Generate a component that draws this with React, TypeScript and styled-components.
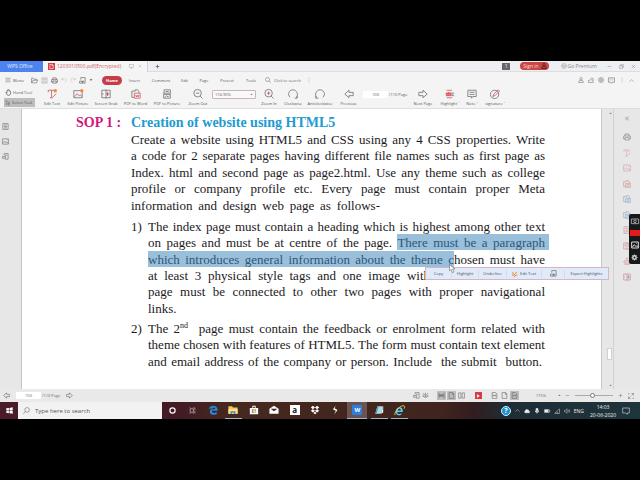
import React from "react";
import styled, { createGlobalStyle, css } from "styled-components";

const Global = createGlobalStyle`
  * { box-sizing: border-box; }
  html, body, #root { height: 100%; }
  body { margin: 0; background: #000; font-family: "Open Sans", "Noto Sans", sans-serif; overflow: hidden; }
  button, input, select { font: inherit; color: inherit; border: 0; margin: 0; padding: 0; background: none; min-width: 0; }
  h1, p, ol { margin: 0; padding: 0; }
`;

/* ---------- icons ---------- */
const paths: Record<string, React.ReactNode> = {
  monitor: <><rect x="2" y="3" width="20" height="14" /><path d="M8 21h8M12 17v4" /></>,
  close: <path d="M4 4l16 16M20 4L4 20" />,
  plus: <path d="M12 3v18M3 12h18" />,
  minus: <path d="M3 12h18" />,
  menu: <path d="M2 5h20M2 12h20M2 19h20" />,
  folder: <path d="M2 20V4h7l3 4h8v3M2 20l5-9h16l-4 9z" />,
  save: <path d="M3 3h18v18H3zM7 3v6h10V3M7 21v-7h10v7" />,
  print: <path d="M6 9V3h12v6M6 18H2V9h20v9h-4M6 14h12v7H6z" />,
  undo: <path d="M3 4v7h7M3 11c4-8 17-8 18 2 0 4-3 7-7 8" />,
  redo: <path d="M21 4v7h-7M21 11C17 3 4 3 3 13c0 4 3 7 7 8" />,
  convert: <path d="M6 9V2h15v19h-9M2 14h10v7H2zM8 17h8M16 12v5" />,
  down: <path d="M5 8h14l-7 8z" fill="currentColor" />,
  play: <path d="M7 3l14 9-14 9z" fill="currentColor" />,
  search: <><circle cx="10" cy="10" r="8" /><path d="M16 16l7 7" /></>,
  find: <><circle cx="14" cy="10" r="8" /><path d="M8 16l-7 7" /></>,
  dots: <path d="M12 3v3M12 11v3M12 19v3" />,
  restore: <path d="M3 8h13v13H3zM8 8V3h13v13h-5" />,
  person: <><circle cx="12" cy="7" r="5" /><path d="M3 22v-5l5-3h8l5 3v5z" /></>,
  share: <path d="M2 12v10h19v-9M7 16c0-7 4-9 9-9V3l6 6-6 5v-3" />,
  ring: <><circle cx="12" cy="12" r="10" /><circle cx="12" cy="12" r="5" /><path d="M10 12h4" /></>,
  chat: <path d="M2 3h20v15h-7l-3 4-3-4H2zM7 10h2M11 10h2M15 10h2" />,
  up: <path d="M2 17l10-9 10 9" />,
  hand: <path d="M7 13V5q2-2 3 0V3q2-2 3 0v2q2-2 3 0v3q3-1 3 1v7q-1 6-7 6-5 0-7-6l-2-4q2-2 4 1z" />,
  cursor: <path d="M5 2v17l5-5 4 8 3-2-4-8h7z" />,
  zoomOut: <><circle cx="11" cy="10" r="9" /><path d="M7 10h8M17 17l6 6" /></>,
  zoomIn: <><circle cx="11" cy="10" r="9" /><path d="M17 17l6 6" /><path d="M7 10h8M11 6v8" stroke="#d04050" /></>,
  clockwise: <path d="M16 22h6v-5M20 21c6-8 1-19-8-19C2 2-2 13 5 20" />,
  anti: <path d="M8 22H2v-5M4 21C-2 13 3 2 12 2c10 0 14 11 7 18" />,
  left: <path d="M2 12l10-9v5h10v8H12v5z" />,
  right: <path d="M22 12L12 3v5H2v8h10v5z" />,
  text: <path d="M3 8V3h15v5M11 3v18M7 21h7M15 19l7-8" />,
  editText: <><path d="M3 8V3h15v5M11 3v18M7 21h7M15 19l7-8" stroke="#b85058" /><circle cx="20" cy="4" r="4" fill="#f28a3c" stroke="none" /></>,
  editPic: <><path d="M2 4h20v17H2z" /><path d="M4 19l6-8 5 6 3-3 3 4" stroke="#c8505a" /><circle cx="21" cy="4" r="4" fill="#f28a3c" stroke="none" /></>,
  grab: <><path d="M2 3h20v18H2zM12 1v22M2 12h4" /><path d="M16 7v10M13 12h7" stroke="#b03040" /></>,
  toWord: <><path d="M2 20V5h8V2h6l3 4v3M2 20h5" /><path d="M8 10h14v12H8zM11 14l2 5 2-4 2 4 2-5" stroke="#d04a56" /></>,
  files: <path d="M2 20V5h8V2h6l3 4v3M2 20h5M8 10h14v12H8zM11 14h8M11 18h8" />,
  toPic: <path d="M5 9V2h15v7M2 10h20M4 13h16v9H4zM7 20l4-4 3 3 3-3M9 6h7" />,
  abc: <><path d="M4 3h13M4 21h13" stroke="#d64c55" /><path d="M2 7h15v10H2z" fill="#f2b0b4" stroke="none" /><path d="M3 15v-4h4v5H3M9 7v9h4v-5H9" stroke="#cf3b46" /><path d="M22 10h-5v6h5" /></>,
  note: <path d="M2 3h20v15h-8l-3 4v-4H2zM6 8h12M6 13h12" />,
  sign: <><circle cx="11" cy="13" r="10" /><path d="M7 18l2-6L20 2l3 3-10 10z" stroke="#c94450" /></>,
  pen: <path d="M4 4v17M8 21l13-5M8 16L20 3" />,
  list: <path d="M3 2h18v20H3zM7 7h10M7 12h10M7 17h10" />,
  picture: <path d="M2 3h20v18H2zM4 18l6-7 5 6 3-3 4 4M16 7h2" />,
  attach: <path d="M7 8V2h14v19H10M2 12h10v6H2zM10 8h8" />,
  first: <path d="M5 3v18M20 3L8 12l12 9" />,
  eye: <path d="M2 14q10-12 20 0-10 10-20 0zM12 2v4M4 4l3 4M20 4l-3 4M12 11v6M9 14h6" />,
  page: <path d="M4 2h12l4 5v15H4zM15 2v6h5" />,
  split: <path d="M2 3h20v18H2zM12 1v22M5 8h4M5 12h4M15 8h4M15 12h4" />,
  stamp: <path d="M9 11V4q3-4 6 0v7M3 12h18v6H3zM4 22h16" />,
  wide: <path d="M3 2v7h18V2M3 22v-7h18v7M1 12h22" />,
  book: <path d="M2 3h8v18H2zM14 3h8v18h-8z" />,
  fit: <path d="M4 2h12l4 5v15H4zM8 12h8M8 9v6M16 9v6" />,
  expand: <path d="M14 2h8v8M2 14v8h8M22 2l-8 8M2 22l8-8M2 6V2h4M22 18v4h-4" />,
  wifi: <path d="M3 22L22 3v19zM9 22q-1-4-2-4M15 22q0-7-4-8" />,
  sound: <path d="M2 9h4l6-6v18l-6-6H2zM16 8q4 4 0 8M20 5q5 7 0 14" />,
  battery: <><path d="M2 6h18v12H2zM20 10h3v5h-3" /><path d="M4 8h12v8H4z" fill="currentColor" /></>,
  mic: <path d="M8 2h8v12H8zM5 11q0 7 7 7 7 0 7-7M12 18v5" fill="currentColor" />,
  cloud: <path d="M4 19q-4-4 1-8 2-7 9-4 4-1 5 4 6 3 2 8z" fill="currentColor" />,
  notice: <path d="M2 3h20v15h-6v4l-5-4H2z" />,
  camera: <><path d="M1 6h22v14H1z" /><circle cx="12" cy="13" r="4" /></>,
  gear: <><circle cx="12" cy="12" r="6" strokeWidth="5" /><path d="M12 1v4M12 19v4M1 12h4M19 12h4M4 4l3 3M17 17l3 3M20 4l-3 3M4 20l3-3" /></>,
  task: <path d="M4 6h11v12H4zM4 1v3M15 1v3M4 20v3M15 20v3M20 2v8M20 13v9" />,
  circle: <circle cx="12" cy="12" r="9" strokeWidth="4" />,
  crown: <><circle cx="12" cy="12" r="10" /><path d="M6 9l3 8h6l3-8-4 3-2-5-2 5z" /></>,
};

const Svg = styled.svg<{ $c?: string; $s: number }>`
  display: block;
  flex: none;
  width: ${p => p.$s}px;
  height: ${p => p.$s}px;
  color: ${p => p.$c || "#666"};
  overflow: visible;
`;
const Icon = ({ n, s = 7, c, w = 2 }: { n: string; s?: number; c?: string; w?: number }) => (
  <Svg viewBox="0 0 24 24" $s={s} $c={c} fill="none" stroke="currentColor" strokeWidth={w} aria-hidden="true">{paths[n]}</Svg>
);
const Art = ({ children, s = 10 }: { children: React.ReactNode; s?: number }) => (
  <Svg viewBox="0 0 24 24" $s={s} fill="none" aria-hidden="true">{children}</Svg>
);

/* ---------- frame ---------- */
const Screen = styled.div`
  height: 100vh;
  padding: 61px 0;
  display: flex;
  flex-direction: column;
  background: #000;
`;
const Row = styled.div<{ $gap?: number; $before?: number }>`
  display: flex;
  align-items: center;
  gap: ${p => p.$gap || 0}px;
  margin-left: ${p => p.$before || 0}px;
`;
const Spacer = styled.div`flex: 1;`;
const IconButton = styled.button<{ $on?: boolean }>`
  display: flex;
  align-items: center;
  justify-content: center;
  ${p => p.$on && css`background: #bdbdbf;`}
`;

/* ---------- title bar ---------- */
const TitleBar = styled.header`
  flex: none;
  height: 11px;
  display: flex;
  align-items: center;
  padding-right: 4px;
  background: #eeeff2;
  color: #85868a;
  font-size: 5px;
  line-height: 10px;
  border-bottom: 1px solid #dcdde0;
`;
const Brand = styled.button`
  width: 43px;
  height: 11px;
  padding-right: 3px;
  background: #4c83ee;
  color: #e4edff;
`;
const Tab = styled.div`
  width: 105px;
  height: 11px;
  display: flex;
  align-items: center;
  gap: 2px;
  padding: 0 5px 0 5px;
  background: #f5f5f6;
  color: #cc6464;
  border-right: 1px solid #d2d3d6;
`;
const TabTools = styled(Row)`margin-left: auto;`;
const NewTab = styled(IconButton)`width: 18px;`;
const PdfMark = styled.span`
  width: 7px;
  height: 7px;
  display: flex;
  align-items: center;
  justify-content: center;
  background: #d63a42;
`;
const Count = styled.span`
  width: 8px;
  height: 7px;
  background: #66676b;
  color: #fff;
  line-height: 7px;
  text-align: center;
`;
const SignIn = styled.button`
  display: flex;
  align-items: center;
  gap: 2px;
  height: 8px;
  padding: 0 2px 0 3px;
  border-radius: 4px;
  background: #cb4642;
  color: #f8dcda;
  line-height: 8px;
`;

/* ---------- menus and tools ---------- */
const MenuBar = styled.nav`
  flex: none;
  height: 15px;
  display: grid;
  grid-template-columns: 26px 71px 20px 25px 28px 19px 20px 26px 22px auto 1fr auto;
  align-items: center;
  padding: 1px 6px 0 5px;
  background: #f4f4f4;
  color: #555;
  font-size: 4px;
`;
const MenuItem = styled.button<{ $active?: boolean }>`
  height: 9px;
  line-height: 9px;
  white-space: nowrap;
  text-align: center;
  ${p => p.$active && css`
    border-radius: 5px;
    background: #c63d48;
    color: #fff;
    font-weight: 700;
  `}
`;
const SearchBox = styled.label`
  display: flex;
  align-items: center;
  gap: 3px;
  padding-left: 3px;
  input { width: 29px; height: 9px; }
  input::placeholder { color: #666; opacity: 1; }
`;
const ToolBar = styled.div`
  flex: none;
  height: 22px;
  display: grid;
  grid-template-columns: 39px 26px 26px 30px 29px 34px 28px 45px 24px 24px 30px 27px 47px 28px 26px 18px 28px;
  background: #f4f4f4;
  color: #555;
  font-size: 4px;
  border-bottom: 1px solid #dedede;
`;
const ModeStack = styled.div`
  display: grid;
  grid-template-rows: 11px 9px;
  padding: 0 4px;
`;
const ModeButton = styled.button<{ $on?: boolean }>`
  display: flex;
  align-items: center;
  gap: 1px;
  padding-left: 1px;
  white-space: nowrap;
  background: ${p => (p.$on ? "#bdbdbd" : "none")};
`;
const Tool = styled.button`
  display: flex;
  flex-direction: column;
  align-items: center;
  gap: 2px;
  padding-top: 2px;
  line-height: 6px;
  white-space: nowrap;
`;
const ZoomField = styled.div`
  height: 9px;
  margin: 3px 1px 0 0;
  display: flex;
  align-items: center;
  padding-right: 2px;
  border: 1px solid #c9b4b8;
  border-radius: 1px;
  background: #f9f9f9;
`;
const ZoomSelect = styled.select`
  appearance: none;
  flex: 1;
  height: 7px;
  padding-left: 2px;
  line-height: 7px;
`;
const PageField = styled.label`
  display: flex;
  align-items: center;
  gap: 1px;
  height: 15px;
  padding-left: 1px;
  white-space: nowrap;
`;
const PageInput = styled.input`
  width: 25px;
  height: 7px;
  background: #fff;
  text-align: center;
`;

/* ---------- document ---------- */
const Work = styled.main`
  flex: 1;
  min-height: 0;
  display: grid;
  grid-template-columns: 22px minmax(0, 1fr) 13px 26px;
  background: #e7e7e8;
`;
const LeftRail = styled.aside`
  display: flex;
  flex-direction: column;
  gap: 8px;
  padding: 14px 0 0 2px;
  border-right: 1px solid #c4c4c6;
`;
const Sheet = styled.article`
  position: relative;
  background: #fff;
  color: #1c1a1d;
  padding: 5px 56px 0 54px;
  font-family: "Liberation Serif", serif;
  font-size: 13px;
`;
const Section = styled.div`
  display: grid;
  grid-template-columns: 55px minmax(0, 1fr);
`;
const Label = styled.strong`
  font-size: 14px;
  line-height: 18px;
  color: #d1177c;
`;
const Title = styled.h1`
  font-size: 14px;
  line-height: 18px;
  color: #1e9bd0;
`;
const Lines = styled.p<{ $h: number }>`
  display: flex;
  flex-direction: column;
  height: ${p => p.$h}px;
`;
const Line = styled.span<{ $ragged?: boolean; $end?: number }>`
  flex: 1;
  display: block;
  padding-right: ${p => p.$end || 0}px;
  line-height: 16px;
  white-space: nowrap;
  text-align: justify;
  text-align-last: ${p => (p.$ragged ? "left" : "justify")};
  sup { font-size: 8px; line-height: 0; vertical-align: 5px; }
`;
const Item = styled.li`
  display: grid;
  grid-template-columns: 17px minmax(0, 1fr);
  line-height: 16px;
`;
const Items = styled.ol`
  list-style: none;
  display: grid;
  gap: 4px;
  margin-top: 5px;
`;
const Mark = styled.mark<{ $tail?: boolean }>`
  background: #99bfdb;
  color: #2d5878;
  padding: 1px 0 0;
  ${p => p.$tail && css`
    padding-right: 4px;
    margin-right: -4px;
  `}
`;
const Popup = styled.div`
  position: absolute;
  left: 403px;
  top: 158px;
  width: 184px;
  height: 13px;
  display: grid;
  grid-template-columns: 25px 27px 28px 35px 23px 1fr;
  align-items: center;
  border: 1px solid #d4b7c6;
  background: #e1eaf8;
  color: #444c5c;
  font: 4px "Open Sans", sans-serif;
  z-index: 2;
`;
const PopupButton = styled.button`
  display: flex;
  align-items: center;
  justify-content: center;
  gap: 2px;
  height: 8px;
  white-space: nowrap;
  & + & { border-left: 1px solid #d3dae8; }
`;
const Pointer = styled.svg`
  position: absolute;
  left: 427px;
  top: 155px;
  width: 7px;
  height: 9px;
  z-index: 3;
`;
const Scroll = styled.div`
  display: flex;
  flex-direction: column;
  align-items: flex-end;
  padding: 3px 1px 2px 0;
  border-left: 1px solid #c9c9cb;
  border-right: 1px solid #d2d2d4;
`;
const Track = styled.div`
  flex: 1;
  display: grid;
  grid-template-rows: 86fr 12px 9fr;
`;
const Thumb = styled.div`
  grid-row: 2;
  width: 5px;
  border: 1px solid #cfcfcf;
  background: #fff;
`;
const RightRail = styled.aside`
  position: relative;
  display: flex;
  flex-direction: column;
  align-items: center;
  gap: 12px;
  padding-top: 7px;
`;
const RailTools = styled.div`
  height: 148px;
  display: flex;
  flex-direction: column;
  justify-content: space-between;
  opacity: 0.8;
`;
const Recorder = styled.div`
  position: absolute;
  right: 0;
  top: 105px;
  width: 11px;
  height: 50px;
  display: flex;
  flex-direction: column;
  align-items: center;
  justify-content: space-around;
  border-radius: 2px 0 0 2px;
  background: #17181a;
`;
const Rec = styled.button`
  width: 10px;
  height: 6px;
  background: #e51b1b;
`;

/* ---------- status and task bars ---------- */
const Status = styled.footer`
  flex: none;
  height: 13px;
  display: flex;
  align-items: center;
  padding: 0 6px 0 3px;
  background: #e9e9ea;
  color: #666;
  font-size: 4px;
`;
const Chip = styled(IconButton)`
  width: 9px;
  height: 9px;
`;
const Range = styled.input`
  appearance: none;
  width: 38px;
  height: 7px;
  &::-webkit-slider-runnable-track { height: 1px; background: #aaa; }
  &::-webkit-slider-thumb {
    appearance: none;
    width: 5px;
    height: 5px;
    margin-top: -2px;
    border: 1px solid #777;
    border-radius: 50%;
    background: #fff;
  }
`;
const TaskBar = styled.footer`
  flex: none;
  height: 17px;
  display: flex;
  align-items: stretch;
  background: linear-gradient(90deg, #4a1c29 0, #421b24 28%, #45281f 36%, #40251f 69%, #331c20 74%, #1f2c34 79%, #1e353d 100%);
  color: #eee;
`;
const Start = styled(IconButton)`width: 18px;`;
const TaskSearch = styled.label`
  width: 144px;
  display: flex;
  align-items: center;
  gap: 5px;
  padding-left: 5px;
  background: #f2f2f2;
  color: #555;
  font-size: 6px;
  input { width: 110px; height: 15px; }
  input::placeholder { color: #555; opacity: 1; }
`;
const TaskApps = styled.div`
  width: 248px;
  display: flex;
  justify-content: space-around;
`;
const TaskApp = styled.button<{ $open?: boolean; $on?: boolean }>`
  width: ${p => (p.$on ? 20 : 17)}px;
  display: flex;
  align-items: center;
  justify-content: center;
  background: ${p => (p.$on ? "#6a5450" : "none")};
  border-bottom: 1px solid ${p => (p.$open ? "#9fb6c4" : "transparent")};
`;
const Clock = styled.time`
  width: 30px;
  font-size: 5px;
  line-height: 8px;
  text-align: center;
`;
const Tray = styled(Row)`
  font-size: 5px;
  padding-right: 10px;
`;
const Tile = styled.span<{ $bg: string; $c: string }>`
  width: 10px;
  height: 10px;
  background: ${p => p.$bg};
  color: ${p => p.$c};
  font: 700 8px/10px "Open Sans", sans-serif;
  text-align: center;
`;
const SmallTile = styled(Tile)`font-size: 6px; border-radius: 1px;`;
const Help = styled(Tile)`border-radius: 50%; border: 1px solid #d9f0fb; font-size: 7px; line-height: 8px;`;

const tools: [string, string][] = [["editText", "Edit Text"], ["editPic", "Edit Picture"], ["grab", "Screen Grab"], ["toWord", "PDF to Word"], ["toPic", "PDF to Picture"], ["zoomOut", "Zoom Out"]];
const intro = [
  "Create a website using HTML5 and CSS using any 4 CSS properties. Write",
  "a code for 2 separate pages having different file names such as first page as",
  "Index. html and second page as page2.html. Use any theme such as college",
  "profile or company profile etc. Every page must contain proper Meta",
];
const rail: [string, string][] = [["print", "#555"], ["text", "#c88"], ["picture", "#cf7d83"], ["files", "#c66"], ["files", "#6288ba"], ["files", "#6288ba"], ["list", "#c66"], ["split", "#b66"], ["stamp", "#c66"], ["grab", "#a67"]];

export default function App() {
  const tool = (n: string, t: string) => <Tool key={t}><Icon n={n} s={10} w={1.8} />{t}</Tool>;
  return (
    <>
      <Global />
      <Screen>
        <TitleBar>
          <Brand>WPS Office</Brand>
          <Tab>
            <PdfMark><Icon n="page" s={5} c="#fff" w={3} /></PdfMark>1203010500.pdf(Encrypted)
            <TabTools $gap={4}><Icon n="monitor" s={5} c="#999" /><Icon n="close" s={4} c="#999" /></TabTools>
          </Tab>
          <NewTab aria-label="New tab"><Icon n="plus" s={5} c="#444" w={3} /></NewTab>
          <Spacer />
          <Row $gap={10}>
            <Count>1</Count>
            <SignIn>Sign in<Icon n="person" s={6} c="#60242a" w={4} /></SignIn>
            <Row $gap={1} $before={2}><Icon n="crown" s={6} c="#999" />Go Premium</Row>
          </Row>
          <Row $gap={7} $before={10}><Icon n="minus" s={5} c="#777" /><Icon n="restore" s={5} c="#777" /><Icon n="close" s={5} c="#777" /></Row>
        </TitleBar>

        <MenuBar>
          <Row $gap={2}><Icon n="menu" s={6} /><MenuItem>Menu</MenuItem></Row>
          <Row $gap={3}>
            <Icon n="folder" /><Icon n="save" c="#aaa" /><Icon n="print" c="#555" /><Icon n="undo" s={6} c="#bbb" /><Icon n="redo" s={6} c="#bbb" /><Icon n="convert" c="#555" /><Icon n="down" s={4} />
          </Row>
          <MenuItem $active>Home</MenuItem>
          {["Insert", "Comment", "Edit", "Page", "Protect", "Tools"].map(t => <MenuItem key={t}>{t}</MenuItem>)}
          <SearchBox><Icon n="search" s={6} /><input aria-label="Search" placeholder="Click to search" /><Icon n="dots" s={6} /></SearchBox>
          <span />
          <Row $gap={4}><Icon n="person" s={6} /><Icon n="share" s={6} /><Icon n="ring" s={6} /><Icon n="chat" s={7} /><Icon n="dots" s={6} /><Icon n="up" s={5} /></Row>
        </MenuBar>

        <ToolBar>
          <ModeStack>
            <ModeButton><Icon n="hand" c="#333" />Hand Tool</ModeButton>
            <ModeButton $on><Icon n="cursor" s={6} />Select Tool</ModeButton>
          </ModeStack>
          {tools.map(([n, t]) => tool(n, t))}
          <ZoomField><ZoomSelect aria-label="Zoom"><option>174.95%</option></ZoomSelect><Icon n="down" s={3} /></ZoomField>
          {tool("zoomIn", "Zoom In")}
          {tool("clockwise", "Clockwise")}
          {tool("anti", "Anticlockwise")}
          {tool("left", "Previous")}
          <PageField><PageInput aria-label="Page" defaultValue="100" />/110 Page</PageField>
          {tool("right", "Next Page")}
          {tool("abc", "Highlight ˅")}
          {tool("note", "Note ˅")}
          {tool("sign", "signature ˅")}
        </ToolBar>

        <Work>
          <LeftRail><Icon n="list" /><Icon n="picture" /><Icon n="attach" /></LeftRail>
          <Sheet>
            <Section>
              <Label>SOP 1 :</Label>
              <div>
                <Title>Creation of website using HTML5</Title>
                <Lines $h={82}>
                  {intro.map(t => <Line key={t}>{t}</Line>)}
                  <Line $end={165}>information and design web page as follows-</Line>
                </Lines>
                <Items>
                  <Item>
                    <span>1)</span>
                    <Lines $h={98}>
                      <Line>The index page must contain a heading which is highest among other text</Line>
                      <Line>on pages and must be at centre of the page. <Mark $tail>There must be a paragraph</Mark></Line>
                      <Line><Mark>which introduces general information about the theme c</Mark>hosen must have</Line>
                      <Line $end={115}>at least 3 physical style tags and one image with</Line>
                      <Line>page must be connected to other two pages with proper navigational</Line>
                      <Line $ragged>links.</Line>
                    </Lines>
                  </Item>
                  <Item>
                    <span>2)</span>
                    <Lines $h={49}>
                      <Line>The 2<sup>nd</sup>&nbsp; page must contain the feedback or enrolment form related with</Line>
                      <Line>theme chosen with features of HTML5. The form must contain text element</Line>
                      <Line $end={3}>and email address of the company or person. Include&nbsp; the submit&nbsp; button.</Line>
                    </Lines>
                  </Item>
                </Items>
              </div>
            </Section>
            <Popup role="toolbar">
              <PopupButton>Copy</PopupButton><PopupButton>Highlight</PopupButton><PopupButton>Underline</PopupButton>
              <PopupButton><Icon n="pen" s={6} c="#e58a35" w={4} />Edit Text</PopupButton>
              <PopupButton aria-label="Convert"><Icon n="convert" c="#555" /></PopupButton>
              <PopupButton>Export Highlights</PopupButton>
            </Popup>
            <Pointer viewBox="0 0 14 18"><path d="M1 1v13l3-3 3 6 3-1-3-6h5z" fill="#fff" stroke="#555" /></Pointer>
          </Sheet>
          <Scroll><Icon n="down" s={3} /><Track><Thumb /></Track><Icon n="down" s={3} /></Scroll>
          <RightRail>
            <Icon n="first" s={5} />
            <RailTools>
              {rail.map(([n, c], i) => <Icon key={i} n={n} c={c} s={8} w={1.6} />)}
            </RailTools>
            <Recorder>
              <Icon n="camera" s={8} c="#ddd" /><Rec aria-label="Record" /><Icon n="picture" s={8} c="#ddd" w={3} /><Icon n="gear" s={7} c="#ddd" />
            </Recorder>
          </RightRail>
        </Work>

        <Status>
          <Row $gap={6}>
            <Icon n="left" />
            <Row $gap={1}><PageInput aria-label="Current page" defaultValue="100" />/110 Page</Row>
            <Icon n="right" />
          </Row>
          <Spacer />
          <Row $gap={2}><Icon n="attach" /><Icon n="eye" /></Row>
          <Row $gap={1} $before={8}><Chip $on><Icon n="wide" /></Chip><Chip $on><Icon n="page" /></Chip><Chip><Icon n="book" /></Chip></Row>
          <Row $before={9}><PdfMark><Icon n="play" s={4} c="#fff" /></PdfMark></Row>
          <Row $gap={1} $before={8}><Chip><Icon n="fit" /></Chip><Chip><Icon n="page" /></Chip><Chip $on><Icon n="fit" /></Chip></Row>
          <Row $gap={12} $before={17}><span>175%</span><Icon n="down" s={3} /></Row>
          <Row $gap={5} $before={4}><Icon n="minus" s={5} /><Range type="range" aria-label="Zoom level" defaultValue={46} /><Icon n="plus" s={5} /><Icon n="expand" s={6} /></Row>
        </Status>

        <TaskBar>
          <Start aria-label="Start"><Art s={7}><path d="M1 4l9-1v8H1zM12 3l11-2v10H12zM1 13h9v8l-9-1zM12 13h11v10l-11-2z" fill="#fff" /></Art></Start>
          <TaskSearch><Icon n="find" s={7} /><input aria-label="Type here to search" placeholder="Type here to search" /></TaskSearch>
          <TaskApps>
            <TaskApp aria-label="Cortana"><Icon n="circle" s={7} c="#fff" /></TaskApp>
            <TaskApp aria-label="Task view"><Icon n="task" s={7} c="#ddd" /></TaskApp>
            <TaskApp aria-label="Edge"><Art><path d="M1 11C3 0 22-2 23 11v3H9c1 6 8 6 12 3v5C10 27 2 20 5 13c1-2 3-4 5-4-5-1-8 0-9 2zM10 10h7c0-5-6-4-7 0z" fill="#2389d8" /></Art></TaskApp>
            <TaskApp aria-label="Files" $open><Art><path d="M1 3h9l2 3h11v15H1z" fill="#f3c956" /><path d="M1 10h22v11H1z" fill="#ffe28c" /><path d="M6 21v-6h12v6h-4v-3h-4v3z" fill="#3488c7" /></Art></TaskApp>
            <TaskApp aria-label="Store"><Art><path d="M2 7h20v15H2zM8 7V2h8v5h-2V4h-4v3z" fill="#fff" /><path d="M7 10h4v4H7z" fill="#e54" /><path d="M13 10h4v4h-4z" fill="#7b2" /><path d="M7 15h4v4H7z" fill="#19d" /><path d="M13 15h4v4h-4z" fill="#eb2" /></Art></TaskApp>
            <TaskApp aria-label="Mail"><Art><path d="M1 9l11-7 11 7v12H1z" fill="#fff" /><path d="M4 9h16l-8 6z" fill="#3b2522" /></Art></TaskApp>
            <TaskApp aria-label="Amazon"><Tile $bg="#fff" $c="#111">a</Tile></TaskApp>
            <TaskApp aria-label="Dropbox"><Art><path d="M7 2l5 4-5 4-5-4zM17 2l5 4-5 4-5-4zM7 10l5 4-5 4-5-4zM17 10l5 4-5 4-5-4zM12 16l4 3-4 3-4-3z" fill="#fff" /></Art></TaskApp>
            <TaskApp aria-label="Launcher"><Art><path d="M14 1L7 10l7 4-4 9 8-11-7-4z" fill="#fff" /></Art></TaskApp>
            <TaskApp aria-label="WPS" $open $on><SmallTile $bg="#2f7de1" $c="#fff">W</SmallTile></TaskApp>
            <TaskApp aria-label="Notepad" $open><Art><path d="M8 3h14l-5 18H3z" fill="#a9dbe8" /><path d="M3 21L8 3l3 1-4 14z" fill="#5d8e9a" /><path d="M17 21l5-18v15z" fill="#fff" /></Art></TaskApp>
            <TaskApp aria-label="Internet Explorer" $open><Art s={11}><path d="M19 15H7c1 6 7 5 11 3-2 4-7 6-11 3-6-4-3-16 5-16 6 0 8 5 7 10zM8 12h7c0-5-6-5-7 0z" fill="#5bcaf0" /><path d="M2 22C0 14 16-1 22 2c2 1 1 4 0 6" stroke="#f4cf45" strokeWidth="2" /></Art></TaskApp>
          </TaskApps>
          <Spacer />
          <Tray $gap={4}>
            <Help $bg="#1593d2" $c="#fff">?</Help>
            <Icon n="up" s={5} c="#eee" /><Icon n="cloud" s={6} c="#eee" /><Icon n="mic" s={6} c="#eee" /><Icon n="battery" s={6} c="#eee" /><Icon n="wifi" s={6} c="#ccc" /><Icon n="sound" s={6} c="#ccc" />ENG
            <Clock>14:03<br />20-06-2020</Clock>
            <Icon n="notice" s={8} c="#ccc" />
          </Tray>
        </TaskBar>
      </Screen>
    </>
  );
}
